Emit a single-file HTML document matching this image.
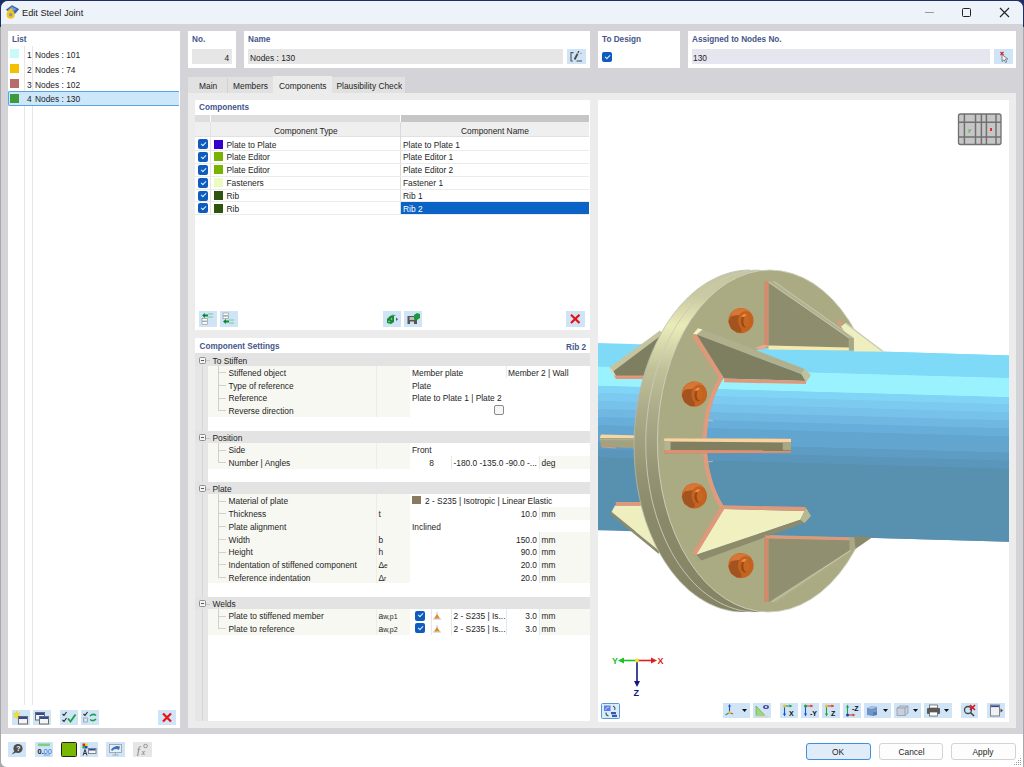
<!DOCTYPE html>
<html><head><meta charset="utf-8">
<style>
*{box-sizing:border-box;margin:0;padding:0}
html,body{width:1024px;height:767px;overflow:hidden}
body{background:linear-gradient(#1d2f66 0,#1d2f66 27px,#a9a9ac 27px);font-family:"Liberation Sans",sans-serif;font-size:8.4px;color:#1e1e1e;position:relative}
.a{position:absolute}
.t{position:absolute;white-space:nowrap;line-height:13.4px}
.h{position:absolute;white-space:nowrap;font-weight:bold;font-size:8.2px;color:#45568a;line-height:12px}
.btn{position:absolute;background:#cfe4f6;width:18px;height:15px}
.cb{position:absolute;width:10px;height:10px;background:#0f5cbf;border-radius:2px}
.cb:after{content:"";position:absolute;left:3.7px;top:1.9px;width:2.2px;height:4.2px;border:solid #e8f0ff;border-width:0 1px 1px 0;transform:rotate(45deg)}
.sw{position:absolute;width:9px;height:9px}
svg{position:absolute;overflow:visible}
</style></head>
<body>
<!-- window background -->
<div class="a" style="left:1px;top:1px;width:1022px;height:766px;background:#d3d3d8;border-radius:7px 7px 0 6px"></div>
<div class="a" style="left:1px;top:1px;width:1022px;height:23px;background:#eef2f9;border-radius:7px 7px 0 0"></div>
<div class="a" style="left:1px;top:734px;width:1022px;height:33px;background:#ffffff;border-radius:0 0 0 6px"></div>
<svg style="left:1014px;top:758px" width="9" height="9"><g fill="#9a9a9a"><rect x="6" y="0" width="1" height="1"/><rect x="4" y="2" width="1" height="1"/><rect x="6" y="2" width="1" height="1"/><rect x="2" y="4" width="1" height="1"/><rect x="4" y="4" width="1" height="1"/><rect x="6" y="4" width="1" height="1"/><rect x="0" y="6" width="1" height="1"/><rect x="2" y="6" width="1" height="1"/><rect x="4" y="6" width="1" height="1"/><rect x="6" y="6" width="1" height="1"/></g></svg>

<!-- title -->
<svg style="left:0;top:0" width="24" height="24" viewBox="0 0 24 24">
  <polygon points="6.3,9.8 12,5.6 18.7,9.2 14.8,13.8 9.5,11.5" fill="#3563b0" stroke="#24407a" stroke-width="0.5"/>
  <polygon points="8,9.6 12,6.6 16.5,9 13.5,11.8" fill="#6a9ae0"/>
  <circle cx="10.7" cy="14.7" r="2.9" fill="#8a8fa8" stroke="#f2c61c" stroke-width="2.3"/>
  <path d="M12.6 9.4 Q8.2 10 7.8 14.5" fill="none" stroke="#f2c61c" stroke-width="2.3"/>
</svg>
<div class="t" style="left:22px;top:7px;font-size:9.2px;color:#1b1b1b">Edit Steel Joint</div>
<div class="a" style="left:925px;top:12px;width:9px;height:1px;background:#9a9a9a"></div>
<div class="a" style="left:962px;top:8px;width:9px;height:9px;border:1.2px solid #222;border-radius:1.5px"></div>
<svg style="left:999px;top:7px" width="11" height="11"><path d="M1 1 L10 10 M10 1 L1 10" stroke="#222" stroke-width="1.1"/></svg>

<!-- LEFT LIST PANEL -->
<div class="a" style="left:8px;top:31px;width:172px;height:697px;background:#fff"></div>
<div class="h" style="left:12px;top:34px">List</div>
<div class="a" style="left:24px;top:46px;width:1px;height:659px;background:#e6e6e6"></div>
<div class="a" style="left:32px;top:46px;width:1px;height:659px;background:#e6e6e6"></div>
<div class="a" style="left:8px;top:91px;width:170.6px;height:15px;background:#cce6fa;border:1px solid #5aa4e6;border-right:none;border-radius:2px 0 0 2px"></div>
<div class="sw" style="left:10px;top:49px;background:#c8fafa"></div>
<div class="sw" style="left:10px;top:64px;background:#f5c000"></div>
<div class="sw" style="left:10px;top:79px;background:#b86c6c"></div>
<div class="sw" style="left:10px;top:93.5px;background:#3e9a3a"></div>
<div class="t" style="left:27px;top:48.5px">1</div><div class="t" style="left:35px;top:48.5px">Nodes : 101</div>
<div class="t" style="left:27px;top:63.5px">2</div><div class="t" style="left:35px;top:63.5px">Nodes : 74</div>
<div class="t" style="left:27px;top:78.5px">3</div><div class="t" style="left:35px;top:78.5px">Nodes : 102</div>
<div class="t" style="left:27px;top:93px">4</div><div class="t" style="left:35px;top:93px">Nodes : 130</div>

<!-- HEADER FIELDS -->
<div class="a" style="left:188px;top:31px;width:48px;height:37px;background:#fff"></div>
<div class="h" style="left:192px;top:34px">No.</div>
<div class="a" style="left:192px;top:49px;width:40px;height:15px;background:#e6e6e6"></div>
<div class="t" style="left:224.5px;top:51.5px">4</div>

<div class="a" style="left:244px;top:31px;width:345.5px;height:37px;background:#fff"></div>
<div class="h" style="left:248px;top:34px">Name</div>
<div class="a" style="left:248px;top:49px;width:315px;height:15px;background:#e6e6e6"></div>
<div class="t" style="left:250px;top:52px">Nodes : 130</div>


<div class="a" style="left:598px;top:31px;width:82px;height:37px;background:#fff"></div>
<div class="h" style="left:602px;top:34px">To Design</div>
<div class="cb" style="left:602px;top:52px"></div>

<div class="a" style="left:688px;top:31px;width:328px;height:37px;background:#fff"></div>
<div class="h" style="left:692px;top:34px">Assigned to Nodes No.</div>
<div class="a" style="left:692px;top:49px;width:298px;height:15px;background:#e6e6f0"></div>
<div class="t" style="left:693px;top:52px">130</div>


<!-- TABS -->
<div class="a" style="left:188px;top:77px;width:217px;height:16px;background:#e1e1e1"></div>
<div class="a" style="left:227px;top:78px;width:1px;height:15px;background:#d0d0d0"></div>
<div class="a" style="left:273px;top:76px;width:59px;height:17px;background:#ececec"></div>
<div class="t" style="left:199px;top:80px">Main</div>
<div class="t" style="left:233px;top:80px">Members</div>
<div class="t" style="left:279px;top:80px">Components</div>
<div class="t" style="left:336.5px;top:80px">Plausibility Check</div>

<!-- CONTENT AREA -->
<div class="a" style="left:188px;top:93px;width:828px;height:635px;background:#ececec"></div>

<!-- COMPONENTS PANEL -->
<div class="a" style="left:195px;top:100px;width:395px;height:230px;background:#fff"></div>
<div class="h" style="left:199px;top:102px">Components</div>


<!-- components table -->
<div class="a" style="left:195px;top:114.5px;width:15px;height:7.5px;background:#dedede"></div>
<div class="a" style="left:211px;top:114.5px;width:189px;height:7.5px;background:#dedede"></div>
<div class="a" style="left:401px;top:114.5px;width:188px;height:7.5px;background:#c6c6c6"></div>
<div class="a" style="left:195px;top:122px;width:394px;height:15px;background:#efefef;border-bottom:1px solid #e2e2e2"></div>
<div class="a" style="left:210px;top:122px;width:1px;height:92px;background:#e4e4e4"></div>
<div class="a" style="left:400px;top:122px;width:1px;height:92px;background:#dadada"></div>
<div class="t" style="left:274px;top:125px">Component Type</div>
<div class="t" style="left:461px;top:125px">Component Name</div>
<div class="a" style="left:195px;top:150.00px;width:394px;height:1px;background:#ebebeb"></div>
<div class="cb" style="left:198px;top:139.20px"></div><div class="sw" style="left:214px;top:139.60px;background:#3300cc"></div>
<div class="t" style="left:226.5px;top:138.50px">Plate to Plate</div>
<div class="t" style="left:403px;top:138.50px">Plate to Plate 1</div>
<div class="a" style="left:195px;top:162.84px;width:394px;height:1px;background:#ebebeb"></div>
<div class="cb" style="left:198px;top:152.04px"></div><div class="sw" style="left:214px;top:152.44px;background:#77b300"></div>
<div class="t" style="left:226.5px;top:151.34px">Plate Editor</div>
<div class="t" style="left:403px;top:151.34px">Plate Editor 1</div>
<div class="a" style="left:195px;top:175.68px;width:394px;height:1px;background:#ebebeb"></div>
<div class="cb" style="left:198px;top:164.88px"></div><div class="sw" style="left:214px;top:165.28px;background:#77b300"></div>
<div class="t" style="left:226.5px;top:164.18px">Plate Editor</div>
<div class="t" style="left:403px;top:164.18px">Plate Editor 2</div>
<div class="a" style="left:195px;top:188.52px;width:394px;height:1px;background:#ebebeb"></div>
<div class="cb" style="left:198px;top:177.72px"></div><div class="sw" style="left:214px;top:178.12px;background:#eafcc0"></div>
<div class="t" style="left:226.5px;top:177.02px">Fasteners</div>
<div class="t" style="left:403px;top:177.02px">Fastener 1</div>
<div class="a" style="left:195px;top:201.36px;width:394px;height:1px;background:#ebebeb"></div>
<div class="cb" style="left:198px;top:190.56px"></div><div class="sw" style="left:214px;top:190.96px;background:#2e5410"></div>
<div class="t" style="left:226.5px;top:189.86px">Rib</div>
<div class="t" style="left:403px;top:189.86px">Rib 1</div>
<div class="a" style="left:195px;top:214.20px;width:394px;height:1px;background:#ebebeb"></div>
<div class="cb" style="left:198px;top:203.40px"></div><div class="sw" style="left:214px;top:203.80px;background:#2e5410"></div>
<div class="t" style="left:226.5px;top:202.70px">Rib</div>
<div class="a" style="left:401px;top:202.40px;width:188px;height:11.8px;background:#0b63c6"></div>
<div class="t" style="left:403px;top:202.70px;color:#fff">Rib 2</div>

<!-- SETTINGS PANEL -->
<div class="a" style="left:195px;top:338px;width:395px;height:383px;background:#fff"></div>
<div class="h" style="left:199.5px;top:340.8px">Component Settings</div>

<!-- settings content -->
<div class="a" style="left:195px;top:353px;width:13px;height:368px;background:#e6e6e6"></div>
<div class="a" style="left:201.5px;top:365px;width:1.5px;height:356px;background:#d6d6d6"></div>
<div class="h" style="left:566px;top:341.5px">Rib 2</div>
<div class="a" style="left:195px;top:353px;width:395px;height:12.5px;background:#e3e3e3"></div>
<div class="a" style="left:198.5px;top:356.5px;width:7px;height:7px;border:1px solid #8c8c8c;border-radius:1.5px;background:#f4f4f4"></div>
<div class="a" style="left:200.5px;top:359.5px;width:3px;height:1px;background:#555"></div>
<div class="a" style="left:206px;top:360px;width:4px;height:1px;background:#c8c8c8"></div>
<div class="t" style="left:212.5px;top:354.50px;">To Stiffen</div>
<div class="a" style="left:208px;top:365.5px;width:202px;height:51.00px;background:#f8f8f3"></div>
<div class="a" style="left:376px;top:365.5px;width:1px;height:51.00px;background:#ececec"></div>
<div class="a" style="left:217.5px;top:365.5px;width:1px;height:44.75px;background:#d0d0d0"></div>
<div class="a" style="left:218px;top:372.00px;width:8px;height:1px;background:#d0d0d0"></div>
<div class="t" style="left:228.5px;top:366.80px;">Stiffened object</div>
<div class="t" style="left:412px;top:366.80px;">Member plate</div>
<div class="a" style="left:506px;top:365.5px;width:1px;height:12.75px;background:#e8e8e8"></div>
<div class="t" style="left:508px;top:366.80px;">Member 2 | Wall</div>
<div class="a" style="left:218px;top:384.75px;width:8px;height:1px;background:#d0d0d0"></div>
<div class="t" style="left:228.5px;top:379.55px;">Type of reference</div>
<div class="t" style="left:412px;top:379.55px;">Plate</div>
<div class="a" style="left:218px;top:397.50px;width:8px;height:1px;background:#d0d0d0"></div>
<div class="t" style="left:228.5px;top:392.30px;">Reference</div>
<div class="t" style="left:412px;top:392.30px;">Plate to Plate 1 | Plate 2</div>
<div class="a" style="left:218px;top:410.25px;width:8px;height:1px;background:#d0d0d0"></div>
<div class="t" style="left:228.5px;top:405.05px;">Reverse direction</div>
<div class="a" style="left:494px;top:405.25px;width:10px;height:10px;border:1px solid #8a8a8a;border-radius:2px;background:#f6f6f6"></div>
<div class="a" style="left:195px;top:430.5px;width:395px;height:12.5px;background:#e3e3e3"></div>
<div class="a" style="left:198.5px;top:434.0px;width:7px;height:7px;border:1px solid #8c8c8c;border-radius:1.5px;background:#f4f4f4"></div>
<div class="a" style="left:200.5px;top:437.0px;width:3px;height:1px;background:#555"></div>
<div class="a" style="left:206px;top:437.5px;width:4px;height:1px;background:#c8c8c8"></div>
<div class="t" style="left:212.5px;top:432.00px;">Position</div>
<div class="a" style="left:208px;top:443.0px;width:202px;height:25.50px;background:#f8f8f3"></div>
<div class="a" style="left:376px;top:443.0px;width:1px;height:25.50px;background:#ececec"></div>
<div class="a" style="left:217.5px;top:443.0px;width:1px;height:19.25px;background:#d0d0d0"></div>
<div class="a" style="left:218px;top:449.50px;width:8px;height:1px;background:#d0d0d0"></div>
<div class="t" style="left:228.5px;top:444.30px;">Side</div>
<div class="t" style="left:412px;top:444.30px;">Front</div>
<div class="a" style="left:218px;top:462.25px;width:8px;height:1px;background:#d0d0d0"></div>
<div class="t" style="left:228.5px;top:457.05px;">Number | Angles</div>
<div class="t" style="left:374px;width:60px;text-align:right;top:457.05px">8</div>
<div class="a" style="left:451px;top:455.75px;width:1px;height:12.75px;background:#e8e8e8"></div>
<div class="t" style="left:453.5px;top:457.05px;">-180.0 -135.0 -90.0 -...</div>
<div class="a" style="left:538.5px;top:455.75px;width:51.5px;height:12.75px;background:#f8f8f3"></div>
<div class="a" style="left:538.5px;top:455.75px;width:1px;height:12.75px;background:#e8e8e8"></div>
<div class="t" style="left:541.5px;top:457.05px;">deg</div>
<div class="a" style="left:195px;top:481.5px;width:395px;height:12.5px;background:#e3e3e3"></div>
<div class="a" style="left:198.5px;top:485.0px;width:7px;height:7px;border:1px solid #8c8c8c;border-radius:1.5px;background:#f4f4f4"></div>
<div class="a" style="left:200.5px;top:488.0px;width:3px;height:1px;background:#555"></div>
<div class="a" style="left:206px;top:488.5px;width:4px;height:1px;background:#c8c8c8"></div>
<div class="t" style="left:212.5px;top:483.00px;">Plate</div>
<div class="a" style="left:208px;top:494.0px;width:202px;height:89.25px;background:#f8f8f3"></div>
<div class="a" style="left:376px;top:494.0px;width:1px;height:89.25px;background:#ececec"></div>
<div class="a" style="left:217.5px;top:494.0px;width:1px;height:83.00px;background:#d0d0d0"></div>
<div class="a" style="left:218px;top:500.50px;width:8px;height:1px;background:#d0d0d0"></div>
<div class="t" style="left:228.5px;top:495.30px;">Material of plate</div>
<div class="a" style="left:412px;top:496.00px;width:9px;height:8px;background:#8a7a60"></div>
<div class="t" style="left:425px;top:495.30px;">2 - S235 | Isotropic | Linear Elastic</div>
<div class="a" style="left:218px;top:513.25px;width:8px;height:1px;background:#d0d0d0"></div>
<div class="t" style="left:228.5px;top:508.05px;">Thickness</div>
<div class="t" style="left:378.5px;top:508.05px;">t</div>
<div class="t" style="left:477px;width:60px;text-align:right;top:508.05px">10.0</div>
<div class="a" style="left:538.5px;top:506.75px;width:51.5px;height:12.75px;background:#f8f8f3"></div>
<div class="a" style="left:538.5px;top:506.75px;width:1px;height:12.75px;background:#e8e8e8"></div>
<div class="t" style="left:541.5px;top:508.05px;">mm</div>
<div class="a" style="left:218px;top:526.00px;width:8px;height:1px;background:#d0d0d0"></div>
<div class="t" style="left:228.5px;top:520.80px;">Plate alignment</div>
<div class="t" style="left:412px;top:520.80px;">Inclined</div>
<div class="a" style="left:218px;top:538.75px;width:8px;height:1px;background:#d0d0d0"></div>
<div class="t" style="left:228.5px;top:533.55px;">Width</div>
<div class="t" style="left:378.5px;top:533.55px;">b</div>
<div class="t" style="left:477px;width:60px;text-align:right;top:533.55px">150.0</div>
<div class="a" style="left:538.5px;top:532.25px;width:51.5px;height:12.75px;background:#f8f8f3"></div>
<div class="a" style="left:538.5px;top:532.25px;width:1px;height:12.75px;background:#e8e8e8"></div>
<div class="t" style="left:541.5px;top:533.55px;">mm</div>
<div class="a" style="left:218px;top:551.50px;width:8px;height:1px;background:#d0d0d0"></div>
<div class="t" style="left:228.5px;top:546.30px;">Height</div>
<div class="t" style="left:378.5px;top:546.30px;">h</div>
<div class="t" style="left:477px;width:60px;text-align:right;top:546.30px">90.0</div>
<div class="a" style="left:538.5px;top:545.0px;width:51.5px;height:12.75px;background:#f8f8f3"></div>
<div class="a" style="left:538.5px;top:545.0px;width:1px;height:12.75px;background:#e8e8e8"></div>
<div class="t" style="left:541.5px;top:546.30px;">mm</div>
<div class="a" style="left:218px;top:564.25px;width:8px;height:1px;background:#d0d0d0"></div>
<div class="t" style="left:228.5px;top:559.05px;">Indentation of stiffened component</div>
<div class="t" style="left:378.5px;top:559.05px;">&Delta;<span style='font-size:6.5px'>e</span></div>
<div class="t" style="left:477px;width:60px;text-align:right;top:559.05px">20.0</div>
<div class="a" style="left:538.5px;top:557.75px;width:51.5px;height:12.75px;background:#f8f8f3"></div>
<div class="a" style="left:538.5px;top:557.75px;width:1px;height:12.75px;background:#e8e8e8"></div>
<div class="t" style="left:541.5px;top:559.05px;">mm</div>
<div class="a" style="left:218px;top:577.00px;width:8px;height:1px;background:#d0d0d0"></div>
<div class="t" style="left:228.5px;top:571.80px;">Reference indentation</div>
<div class="t" style="left:378.5px;top:571.80px;">&Delta;<span style='font-size:6.5px'>r</span></div>
<div class="t" style="left:477px;width:60px;text-align:right;top:571.80px">20.0</div>
<div class="a" style="left:538.5px;top:570.5px;width:51.5px;height:12.75px;background:#f8f8f3"></div>
<div class="a" style="left:538.5px;top:570.5px;width:1px;height:12.75px;background:#e8e8e8"></div>
<div class="t" style="left:541.5px;top:571.80px;">mm</div>
<div class="a" style="left:195px;top:596.5px;width:395px;height:12.5px;background:#e3e3e3"></div>
<div class="a" style="left:198.5px;top:600.0px;width:7px;height:7px;border:1px solid #8c8c8c;border-radius:1.5px;background:#f4f4f4"></div>
<div class="a" style="left:200.5px;top:603.0px;width:3px;height:1px;background:#555"></div>
<div class="a" style="left:206px;top:603.5px;width:4px;height:1px;background:#c8c8c8"></div>
<div class="t" style="left:212.5px;top:598.00px;">Welds</div>
<div class="a" style="left:208px;top:609.0px;width:202px;height:25.50px;background:#f8f8f3"></div>
<div class="a" style="left:376px;top:609.0px;width:1px;height:25.50px;background:#ececec"></div>
<div class="a" style="left:217.5px;top:609.0px;width:1px;height:19.25px;background:#d0d0d0"></div>
<div class="a" style="left:218px;top:615.50px;width:8px;height:1px;background:#d0d0d0"></div>
<div class="t" style="left:228.5px;top:610.30px;">Plate to stiffened member</div>
<div class="t" style="left:378.5px;top:610.30px;">a<span style='font-size:7px'>w,p1</span></div>
<div class="cb" style="left:415px;top:610.50px"></div>
<div class="a" style="left:430.5px;top:609.0px;width:1px;height:12.75px;background:#e8e8e8"></div>
<svg style="left:432px;top:611.00px" width="10" height="9"><path d="M5 1 L5 7 M1 8 L9 8" stroke="#b8c4d8" stroke-width="1"/><path d="M5 3 L2 7.5 L8 7.5 Z" fill="#e08a20"/></svg>
<div class="a" style="left:450.5px;top:609.0px;width:1px;height:12.75px;background:#e8e8e8"></div>
<div class="t" style="left:453.5px;top:610.30px;">2 - S235 | Is...</div>
<div class="a" style="left:505.5px;top:609.0px;width:1px;height:12.75px;background:#e8e8e8"></div>
<div class="t" style="left:477px;width:60px;text-align:right;top:610.30px">3.0</div>
<div class="a" style="left:538.5px;top:609.0px;width:51.5px;height:12.75px;background:#f8f8f3"></div>
<div class="a" style="left:538.5px;top:609.0px;width:1px;height:12.75px;background:#e8e8e8"></div>
<div class="t" style="left:541.5px;top:610.30px;">mm</div>
<div class="a" style="left:218px;top:628.25px;width:8px;height:1px;background:#d0d0d0"></div>
<div class="t" style="left:228.5px;top:623.05px;">Plate to reference</div>
<div class="t" style="left:378.5px;top:623.05px;">a<span style='font-size:7px'>w,p2</span></div>
<div class="cb" style="left:415px;top:623.25px"></div>
<div class="a" style="left:430.5px;top:621.75px;width:1px;height:12.75px;background:#e8e8e8"></div>
<svg style="left:432px;top:623.75px" width="10" height="9"><path d="M5 1 L5 7 M1 8 L9 8" stroke="#b8c4d8" stroke-width="1"/><path d="M5 3 L2 7.5 L8 7.5 Z" fill="#e08a20"/></svg>
<div class="a" style="left:450.5px;top:621.75px;width:1px;height:12.75px;background:#e8e8e8"></div>
<div class="t" style="left:453.5px;top:623.05px;">2 - S235 | Is...</div>
<div class="a" style="left:505.5px;top:621.75px;width:1px;height:12.75px;background:#e8e8e8"></div>
<div class="t" style="left:477px;width:60px;text-align:right;top:623.05px">3.0</div>
<div class="a" style="left:538.5px;top:621.75px;width:51.5px;height:12.75px;background:#f8f8f3"></div>
<div class="a" style="left:538.5px;top:621.75px;width:1px;height:12.75px;background:#e8e8e8"></div>
<div class="t" style="left:541.5px;top:623.05px;">mm</div>
<!-- 3D VIEW -->
<div class="a" style="left:598px;top:100px;width:411px;height:622px;background:#fff"></div>
<!--3DSVG--><svg style="left:598px;top:100px" width="411" height="622" viewBox="598 100 411 622">
<defs>
<linearGradient id="pipeg" gradientUnits="userSpaceOnUse" x1="800" y1="349" x2="794.8" y2="536">
 <stop offset="0.000" stop-color="#7fdaf8"/>
 <stop offset="0.122" stop-color="#7fdaf8"/>
 <stop offset="0.126" stop-color="#9af2ff"/>
 <stop offset="0.224" stop-color="#9af2ff"/>
 <stop offset="0.228" stop-color="#80d4f6"/>
 <stop offset="0.262" stop-color="#80d4f6"/>
 <stop offset="0.266" stop-color="#7ccaf0"/>
 <stop offset="0.305" stop-color="#7ccaf0"/>
 <stop offset="0.309" stop-color="#76c2ea"/>
 <stop offset="0.348" stop-color="#76c2ea"/>
 <stop offset="0.352" stop-color="#70b8e2"/>
 <stop offset="0.391" stop-color="#70b8e2"/>
 <stop offset="0.395" stop-color="#68aeda"/>
 <stop offset="0.434" stop-color="#68aeda"/>
 <stop offset="0.438" stop-color="#62a6d0"/>
 <stop offset="0.520" stop-color="#62a6d0"/>
 <stop offset="0.524" stop-color="#5e9cc4"/>
 <stop offset="0.563" stop-color="#5e9cc4"/>
 <stop offset="0.567" stop-color="#5a96bc"/>
 <stop offset="0.606" stop-color="#5a96bc"/>
 <stop offset="0.610" stop-color="#5890b0"/>
 <stop offset="1.000" stop-color="#5890b0"/>
</linearGradient>
<linearGradient id="rimg" gradientUnits="userSpaceOnUse" x1="0" y1="270" x2="0" y2="612">
 <stop offset="0" stop-color="#c4c49e"/>
 <stop offset="0.08" stop-color="#cacaa2"/>
 <stop offset="0.13" stop-color="#dcdcae"/>
 <stop offset="0.17" stop-color="#eaecb8"/>
 <stop offset="0.23" stop-color="#d6d8aa"/>
 <stop offset="0.30" stop-color="#c0c098"/>
 <stop offset="0.415" stop-color="#acac8a"/>
 <stop offset="0.526" stop-color="#9e9e7c"/>
 <stop offset="0.614" stop-color="#939373"/>
 <stop offset="0.73" stop-color="#8a8a6a"/>
 <stop offset="1" stop-color="#848464"/>
</linearGradient>
</defs>
<polygon points="598,343 1009,355.5 1009,541.8 598,530.2" fill="url(#pipeg)"/>
<polygon points="612,369 662,333 660,376 616,376" fill="#7e7e60"/>
<polygon points="609.5,367.5 660,330.5 663,334 613,371.5" fill="#c4c4a0"/>
<polygon points="612,369 616,376 614,376.5 609.5,368" fill="#d8d8b0"/>
<polygon points="614,375.6 660,375.6 660,379 616,379" fill="#e0987a"/>
<polygon points="599.7,438 640,438.2 640,448.8 601,446.2" fill="#a2a280"/>
<polygon points="601,434.5 640,435.6 640,438.2 599.7,438" fill="#fcd6a2"/>
<polyline points="600,439.6 640,439.8" fill="none" stroke="#c0c0a0" stroke-width="0.6"/>
<polygon points="601,446.2 616,447.6 616,448.6 602.5,447.4" fill="#e0987a"/>
<polygon points="615,505.5 652,505.5 662,553 611.5,512" fill="#eeeebe"/>
<polygon points="615.8,502 652,502 652,505.8 615.8,505.8" fill="#e0987a"/>
<polygon points="611.5,512 660,551.5 658.5,553.8 610,514" fill="#8c8c6c"/>
<ellipse cx="746.7" cy="441.0" rx="112.6" ry="171.0" transform="rotate(1.8 746.7 441.0)" fill="url(#rimg)"/>
<polygon points="752.1,270.1 770.4,270.0 768.0,612.0 741.3,611.9" fill="url(#rimg)"/>
<polyline points="739.4,611.8 733.6,611.3 727.8,610.2 722.1,608.8 716.4,606.8 710.8,604.5 705.3,601.7 700.0,598.4 694.7,594.8 689.6,590.7 684.7,586.2 679.9,581.3 675.3,576.1 670.9,570.5 666.7,564.6 662.7,558.3 658.9,551.7 655.4,544.8 652.1,537.6 649.0,530.2 646.2,522.5 643.7,514.6 641.5,506.6 639.6,498.3 637.9,489.9 636.5,481.3 635.5,472.7 634.7,463.9 634.2,455.1 634.0,446.3 634.2,437.5 634.6,428.6 635.3,419.8 636.3,411.1 637.7,402.4 639.3,393.8 641.2,385.4 643.4,377.1 645.8,369.0 648.6,361.0 651.6,353.3 654.8,345.9 658.3,338.6 662.1,331.7 666.0,325.0 670.2,318.7 674.6,312.7 679.2,307.0 683.9,301.7 688.8,296.7 693.9,292.2 699.1,288.0 704.5,284.3 710.0,281.0 715.5,278.1 721.2,275.6 726.9,273.6 732.6,272.0 738.4,270.9 744.3,270.2 750.1,270.0" fill="none" stroke="#b8b8ac" stroke-width="0.8"/>
<polyline points="752.8,611.9 747.0,611.4 741.2,610.5 735.5,609.1 729.8,607.2 724.2,604.9 718.7,602.2 713.4,599.0 708.1,595.4 702.9,591.4 698.0,587.0 693.1,582.2 688.5,577.0 684.0,571.4 679.7,565.5 675.7,559.3 671.8,552.7 668.2,545.9 664.9,538.8 661.8,531.4 658.9,523.7 656.3,515.9 654.0,507.8 651.9,499.6 650.2,491.2 648.7,482.7 647.5,474.0 646.7,465.3 646.1,456.5 645.8,447.7 645.8,438.8 646.1,430.0 646.8,421.2 647.7,412.4 648.9,403.7 650.4,395.1 652.2,386.7 654.3,378.4 656.6,370.2 659.3,362.3 662.2,354.5 665.3,347.0 668.7,339.7 672.3,332.7 676.2,326.0 680.3,319.6 684.6,313.6 689.1,307.8 693.8,302.5 698.6,297.5 703.6,292.8 708.8,288.6 714.0,284.8 719.4,281.4 725.0,278.5 730.6,275.9 736.2,273.8 741.9,272.2 747.7,271.0 753.5,270.3 759.3,270.0" fill="none" stroke="#cacabe" stroke-width="0.9"/>
<ellipse cx="769.2" cy="441.0" rx="111.8" ry="171.0" transform="rotate(0.4 769.2 441.0)" fill="#abab83" stroke="#cfcfc0" stroke-width="0.9"/>
<polygon points="769.9,347.9 1009.0,355.5 1009.0,541.8 768.5,535.1 768.5,535.1 765.3,534.9 762.0,534.5 758.8,533.9 755.6,533.0 752.4,531.8 749.3,530.4 746.2,528.7 743.2,526.8 740.2,524.7 737.4,522.3 734.6,519.8 731.9,517.0 729.4,514.0 726.9,510.8 724.5,507.4 722.3,503.8 720.2,500.1 718.3,496.2 716.4,492.1 714.7,487.9 713.2,483.6 711.8,479.2 710.6,474.6 709.6,470.0 708.7,465.3 707.9,460.5 707.4,455.7 707.0,450.8 706.8,446.0 706.7,441.1 706.8,436.2 707.1,431.3 707.6,426.4 708.2,421.6 709.0,416.9 710.0,412.2 711.1,407.6 712.4,403.0 713.8,398.6 715.4,394.3 717.1,390.2 719.0,386.1 721.0,382.3 723.2,378.5 725.5,375.0 727.9,371.7 730.4,368.5 733.0,365.5 735.7,362.8 738.5,360.2 741.4,357.9 744.4,355.8 747.4,354.0 750.5,352.3 753.7,351.0 756.8,349.9 760.1,349.0 763.3,348.4 766.6,348.0 769.9,347.9" fill="url(#pipeg)"/>
<polyline points="724.5,510.8 722.6,508.1 720.8,505.2 719.1,502.3 717.5,499.2 716.0,496.1 714.5,492.8 713.2,489.5 711.9,486.1 710.7,482.6 709.7,479.0 708.7,475.4 707.8,471.8 707.0,468.0 706.4,464.3 705.8,460.4 705.4,456.6 705.0,452.7 704.8,448.9 704.6,445.0 704.6,441.1 704.7,437.1 704.9,433.3 705.2,429.4 705.6,425.5 706.1,421.7 706.7,417.9 707.4,414.1 708.2,410.4 709.2,406.7 710.2,403.1 711.3,399.6 712.5,396.1 713.8,392.7 715.2,389.4 716.7,386.2 718.3,383.1 720.0,380.0 721.7,377.1 723.6,374.3 725.5,371.6" fill="none" stroke="#e29a7c" stroke-width="4"/>
<path d="M707.6,420 L713,421 M707.6,462 L713,461" stroke="#f4c4a8" stroke-width="0.7"/>
<polygon points="841,326.6 845.9,322.7 884,351.5 854,351.5 853.7,337.9 848.8,337.9" fill="#eeeebe"/>
<polygon points="837.1,323.2 840,320.3 842.5,323.2 839.6,326.6" fill="#e0987a"/>
<polygon points="845.9,322.7 884,351.5 882,351.5 845,323.5" fill="#c8c8b8"/>
<polygon points="854.1,536 872,537.5 855.4,549" fill="#8a8a6a"/>
<polygon points="768.5,283 768.5,346 848.8,348.5 848.8,337.9" fill="#8e8e6e"/>
<polygon points="768.5,281.3 774,281.3 853.7,337.9 848.8,337.9" fill="#b2b290"/>
<polyline points="768.5,282 848.8,337.9" fill="none" stroke="#d0d0c0" stroke-width="0.7"/>
<polyline points="774,281.3 853.7,337.9" fill="none" stroke="#d0d0c0" stroke-width="0.7"/>
<polygon points="848.8,337.9 853.7,337.9 853.7,349.6 848.8,349" fill="#a8a886"/>
<polygon points="764.1,281.3 768.5,281.3 768.5,345 764.1,345" fill="#d28c6e"/>
<polygon points="754.6,347.9 764.1,344.8 768.5,345.4 762.2,349.8" fill="#f0a888"/>
<polygon points="768.5,345.4 848.8,347.5 848.8,350.5 768.5,349.6" fill="#f6eab0"/>
<polygon points="696.8,334.6 801.5,374 806,381 724.1,378.4" fill="#7e7e60"/>
<polygon points="702.5,329.5 804.7,368.9 801.5,374 696.8,334.6" fill="#b0b08e"/>
<polygon points="801.5,374 804.7,368.9 811,375.2 806,382.2" fill="#c0c09c"/>
<polygon points="693,334 698,328.3 702.5,329.5 696.8,334.6" fill="#f2f2c4"/>
<polygon points="691.7,335.9 696.2,334.6 724.1,378.4 720.3,379.7" fill="#e0987a"/>
<polygon points="724.1,378.4 806,381 806,384.1 724.1,382.2" fill="#e0987a"/>
<polygon points="664.1,438.3 791,438.7 791,452.8 664.1,453.2" fill="#808060"/>
<polygon points="664.1,438.2 791,438.7 791,442.6 664.1,441.5" fill="#f8d4a4"/>
<polygon points="664.1,450 791,450.2 791,452.8 664.1,453.2" fill="#e09070"/>
<polygon points="664.1,441.5 670.6,441.6 670.6,450 664.1,450" fill="#b4b490"/>
<polygon points="782.8,442.6 791,442.6 791,450.2 782.8,450.2" fill="#a8a882"/>
<polygon points="724.1,509 804.7,510.9 800.3,519.8 696.2,554.7" fill="#f0f0c0"/>
<polygon points="696.2,554.7 800.3,519.8 804.7,522.9 701.2,560.4" fill="#8c8c6c"/>
<polygon points="800.3,519.8 806,507.7 811,516 804.7,522.9" fill="#b8b890"/>
<polygon points="693,554.7 696.2,554.7 701.2,560.4 697.4,561" fill="#a8a888"/>
<polygon points="720.3,507.1 724.1,509 696.2,554.7 692.3,553.4" fill="#e0987a"/>
<polygon points="722.8,505.2 806,507.1 804.7,510.9 724.1,509" fill="#e0987a"/>
<polygon points="768.4,538 849.7,540 849.7,550.5 772,602 768.4,602" fill="#909070"/>
<polygon points="769,602 850.3,550 852.8,550 776.7,602" fill="#b0b08e"/>
<polyline points="772,602 850.3,550.5" fill="none" stroke="#d0d0c0" stroke-width="0.7"/>
<polygon points="849.7,537.3 854.1,537.3 854.1,550 849.7,550" fill="#a8a886"/>
<polygon points="764,537.9 768.4,537.9 768.4,602 764,602" fill="#d08a6c"/>
<polygon points="764,535.6 849.7,537.5 849.7,540.2 768.4,538.5" fill="#e0987a"/>
<g transform="translate(741,320.6)"><circle cx="0" cy="0" r="12.6" fill="#c6651f"/><polygon points="-12,-3.5 -7,-10.5 2,-12.6 9,-9 1,-6 -8,-4.5" fill="#d87636"/><polygon points="-9.5,-4.5 -1,-5.5 0.5,11.8 -4,12 -10,8 -12.5,1" fill="#a25320"/><ellipse cx="4.5" cy="0" rx="7.6" ry="9.6" fill="#c4621f"/><ellipse cx="3.8" cy="1" rx="3.6" ry="6" fill="#98481a"/><ellipse cx="5.3" cy="0.5" rx="3" ry="5.8" fill="#c86820"/><polygon points="0,-4 3,-6.5 6,-6 3,-3.5" fill="#ee9050"/></g>
<g transform="translate(694.4,394.2)"><circle cx="0" cy="0" r="12.6" fill="#c6651f"/><polygon points="-12,-3.5 -7,-10.5 2,-12.6 9,-9 1,-6 -8,-4.5" fill="#d87636"/><polygon points="-9.5,-4.5 -1,-5.5 0.5,11.8 -4,12 -10,8 -12.5,1" fill="#a25320"/><ellipse cx="4.5" cy="0" rx="7.6" ry="9.6" fill="#c4621f"/><ellipse cx="3.8" cy="1" rx="3.6" ry="6" fill="#98481a"/><ellipse cx="5.3" cy="0.5" rx="3" ry="5.8" fill="#c86820"/><polygon points="0,-4 3,-6.5 6,-6 3,-3.5" fill="#ee9050"/></g>
<g transform="translate(694.4,495.8)"><circle cx="0" cy="0" r="12.6" fill="#c6651f"/><polygon points="-12,-3.5 -7,-10.5 2,-12.6 9,-9 1,-6 -8,-4.5" fill="#d87636"/><polygon points="-9.5,-4.5 -1,-5.5 0.5,11.8 -4,12 -10,8 -12.5,1" fill="#a25320"/><ellipse cx="4.5" cy="0" rx="7.6" ry="9.6" fill="#c4621f"/><ellipse cx="3.8" cy="1" rx="3.6" ry="6" fill="#98481a"/><ellipse cx="5.3" cy="0.5" rx="3" ry="5.8" fill="#c86820"/><polygon points="0,-4 3,-6.5 6,-6 3,-3.5" fill="#ee9050"/></g>
<g transform="translate(741,565.5)"><circle cx="0" cy="0" r="12.6" fill="#c6651f"/><polygon points="-12,-3.5 -7,-10.5 2,-12.6 9,-9 1,-6 -8,-4.5" fill="#d87636"/><polygon points="-9.5,-4.5 -1,-5.5 0.5,11.8 -4,12 -10,8 -12.5,1" fill="#a25320"/><ellipse cx="4.5" cy="0" rx="7.6" ry="9.6" fill="#c4621f"/><ellipse cx="3.8" cy="1" rx="3.6" ry="6" fill="#98481a"/><ellipse cx="5.3" cy="0.5" rx="3" ry="5.8" fill="#c86820"/><polygon points="0,-4 3,-6.5 6,-6 3,-3.5" fill="#ee9050"/></g>
<line x1="637" y1="660.5" x2="652" y2="660.5" stroke="#e02020" stroke-width="1.6"/>
<polygon points="651,657.5 657,660.5 651,663.5" fill="#e02020"/>
<line x1="637" y1="660.5" x2="623" y2="660.5" stroke="#20c020" stroke-width="1.6"/>
<polygon points="624,657.5 618,660.5 624,663.5" fill="#20c020"/>
<line x1="637" y1="660.5" x2="637" y2="682" stroke="#101880" stroke-width="1.6"/>
<polygon points="634,681 637,687 640,681" fill="#101880"/>
<circle cx="637" cy="660.5" r="2" fill="#f0e020"/>
<text x="657.5" y="664" font-family="Liberation Sans" font-size="9" font-weight="bold" fill="#e02020">X</text>
<text x="612" y="664" font-family="Liberation Sans" font-size="9" font-weight="bold" fill="#20c020">Y</text>
<text x="633.5" y="696" font-family="Liberation Sans" font-size="9" font-weight="bold" fill="#101880">Z</text>
<rect x="958.5" y="114" width="42.5" height="30.5" rx="2" fill="#c6c6c6" stroke="#707070" stroke-width="1.3"/>
<line x1="964.4" y1="114" x2="964.4" y2="144.5" stroke="#707070" stroke-width="1.5"/>
<line x1="975.5" y1="114" x2="975.5" y2="144.5" stroke="#707070" stroke-width="1.5"/>
<line x1="981.4" y1="114" x2="981.4" y2="144.5" stroke="#707070" stroke-width="1.5"/>
<line x1="986.4" y1="114" x2="986.4" y2="144.5" stroke="#707070" stroke-width="1.5"/>
<line x1="996" y1="114" x2="996" y2="144.5" stroke="#707070" stroke-width="1.5"/>
<line x1="958.5" y1="122.3" x2="1001" y2="122.3" stroke="#707070" stroke-width="1.5"/>
<line x1="958.5" y1="137" x2="1001" y2="137" stroke="#707070" stroke-width="1.5"/>
<text x="968" y="132" font-family="Liberation Sans" font-size="6" fill="#30a030" font-style="italic">y</text>
<rect x="990" y="128" width="2" height="3" fill="#e03030"/>
</svg><!--/3DSVG-->

<!--ICONS--><div class="a" style="left:567px;top:49.4px;width:18.5px;height:14.7px;background:#cfe4f6;"></div>
<svg style="left:567px;top:49.4px" width="19" height="15" viewBox="0 0 19 15"><path d="M6.5 3.6 L4 3.6 L4 12 L5.8 12" fill="none" stroke="#555" stroke-width="1.1"/><path d="M9.5 12 L15 12" stroke="#555" stroke-width="1.1"/><path d="M7.6 10.5 L10.6 4.6" stroke="#4a4a4a" stroke-width="1.9"/><path d="M10.9 3.8 L11.8 2.2" stroke="#4a4a4a" stroke-width="1.4"/><circle cx="14" cy="4.3" r="0.5" fill="#4a4a4a"/></svg>
<div class="a" style="left:994px;top:49.2px;width:18.5px;height:15px;background:#cfe4f6;"></div>
<svg style="left:994px;top:49.2px" width="19" height="15" viewBox="0 0 19 15"><path d="M6.5 3 L9.5 6 M9.5 3 L6.5 6" stroke="#e02020" stroke-width="1.2"/><path d="M8 5.5 L8 12.5 L10 10.8 L11.5 13.5 L12.8 12.8 L11.3 10.2 L13.8 10 Z" fill="#f4f4f4" stroke="#6a6a6a" stroke-width="0.8"/></svg>
<div class="a" style="left:11.7px;top:709.5px;width:18px;height:15.3px;background:#cfe4f6;"></div>
<div class="a" style="left:32.8px;top:709.5px;width:18px;height:15.3px;background:#cfe4f6;"></div>
<div class="a" style="left:59.6px;top:709.5px;width:18px;height:15.3px;background:#cfe4f6;"></div>
<div class="a" style="left:81px;top:709.5px;width:18px;height:15.3px;background:#cfe4f6;"></div>
<div class="a" style="left:157.8px;top:709.5px;width:18px;height:15.3px;background:#cfe4f6;"></div>
<svg style="left:11.7px;top:709.5px" width="18" height="16" viewBox="0 0 18 16"><polygon points="4.5,1 5.5,3.5 8,2.5 6.5,4.8 8.5,6.5 6,6.5 5.5,9 4.2,6.8 1.5,7.5 3,5.3 1,3.2 3.6,3.6" fill="#f6e21a" stroke="#e0c000" stroke-width="0.3"/><rect x="6.5" y="6.5" width="9" height="7.5" fill="#f4f4f4" stroke="#6a6a6a" stroke-width="1"/><rect x="7" y="7" width="8" height="2" fill="#2d4aa8"/></svg>
<svg style="left:32.8px;top:709.5px" width="18" height="16" viewBox="0 0 18 16"><rect x="2.5" y="2.5" width="9" height="7.5" fill="#f4f4f4" stroke="#6a6a6a" stroke-width="1"/><rect x="3" y="3" width="8" height="2" fill="#2d4aa8"/><rect x="6.5" y="6.5" width="9" height="7.5" fill="#f4f4f4" stroke="#6a6a6a" stroke-width="1"/><rect x="7" y="7" width="8" height="2" fill="#2d4aa8"/></svg>
<svg style="left:59.6px;top:709.5px" width="18" height="16" viewBox="0 0 18 16"><path d="M2.5 4 L4 5.5 L6.5 2" fill="none" stroke="#222" stroke-width="1.1"/><path d="M2.5 10 L4 11.5 L6.5 8" fill="none" stroke="#222" stroke-width="1.1"/><path d="M8 8.5 L10.5 11.5 L15.5 4.5" fill="none" stroke="#1aa040" stroke-width="1.8"/></svg>
<svg style="left:81px;top:709.5px" width="18" height="16" viewBox="0 0 18 16"><path d="M2.5 4 L4 5.5 L6.5 2" fill="none" stroke="#222" stroke-width="1.1"/><rect x="2.5" y="8" width="4" height="4" fill="none" stroke="#999" stroke-width="0.7"/><path d="M9 6 Q12 3 15 5.5" fill="none" stroke="#1aa040" stroke-width="1.5"/><path d="M15 9 Q12 12 9 9.5" fill="none" stroke="#1aa040" stroke-width="1.5"/></svg>
<svg style="left:157.8px;top:709.5px" width="18" height="16" viewBox="0 0 18 16"><path d="M5 3.5 L13 11.5 M13 3.5 L5 11.5" stroke="#e81010" stroke-width="2.2"/></svg>
<div class="a" style="left:199px;top:311.2px;width:18.3px;height:15.6px;background:#cfe4f6;"></div>
<div class="a" style="left:220.2px;top:311.2px;width:18.3px;height:15.6px;background:#cfe4f6;"></div>
<div class="a" style="left:383px;top:311.2px;width:18.3px;height:15.6px;background:#cfe4f6;"></div>
<div class="a" style="left:404.2px;top:311.2px;width:18.3px;height:15.6px;background:#cfe4f6;"></div>
<div class="a" style="left:566.4px;top:311.2px;width:18.3px;height:15.6px;background:#cfe4f6;"></div>
<svg style="left:199px;top:311.2px" width="19" height="16" viewBox="0 0 19 16"><rect x="3" y="7.5" width="5.5" height="2.5" fill="#fff" stroke="#8a8a8a" stroke-width="0.6"/><rect x="3" y="10.7" width="5.5" height="2.5" fill="#fff" stroke="#8a8a8a" stroke-width="0.6"/><polygon points="3,4.5 6,2 6,3.5 9,3.5 9,5.5 6,5.5 6,7" fill="#0a8a30"/><path d="M9 3 L14 3 M9 6 L14 6" stroke="#6cc890" stroke-width="0.9"/></svg>
<svg style="left:220.2px;top:311.2px" width="19" height="16" viewBox="0 0 19 16"><rect x="3" y="2" width="5.5" height="2.5" fill="#fff" stroke="#8a8a8a" stroke-width="0.6"/><rect x="3" y="5.2" width="5.5" height="2.5" fill="#fff" stroke="#8a8a8a" stroke-width="0.6"/><polygon points="3,10.5 6,8 6,9.5 9,9.5 9,11.5 6,11.5 6,13" fill="#0a8a30"/><path d="M9 9 L14 9 M9 12 L14 12" stroke="#6cc890" stroke-width="0.9"/></svg>
<svg style="left:383px;top:311.2px" width="19" height="16" viewBox="0 0 19 16"><polygon points="4,8 7,5 11,5 11,11 8,13 4,12" fill="#1a8a3a"/><polygon points="7,5 10,3.5 13,4.5 11,5" fill="#2eb050"/><circle cx="6" cy="10.5" r="0.8" fill="#9ef0a0"/><circle cx="8.5" cy="8" r="0.8" fill="#9ef0a0"/><polygon points="13,6.5 15,8.2 13,10" fill="#555"/></svg>
<svg style="left:404.2px;top:311.2px" width="19" height="16" viewBox="0 0 19 16"><path d="M3.5 5 L12 5 L13 6 L13 13 L3.5 13 Z" fill="#555"/><rect x="5.5" y="6" width="5" height="3" fill="#bbb"/><rect x="6" y="10.5" width="4" height="2.5" fill="#ddd"/><polygon points="10,4 13,2 16,3 16,7 13,9 10,8" fill="#1a9a3a"/></svg>
<svg style="left:566.4px;top:311.2px" width="19" height="16" viewBox="0 0 19 16"><path d="M5 3.8 L13.5 12 M13.5 3.8 L5 12" stroke="#e81010" stroke-width="2.2"/></svg>
<div class="a" style="left:7.8px;top:742.3px;width:18.2px;height:14.7px;background:#cfe4f6;"></div>
<div class="a" style="left:34.6px;top:742.3px;width:18.1px;height:14.7px;background:#cfe4f6;"></div>
<div class="a" style="left:79.7px;top:742.3px;width:18px;height:14.7px;background:#cfe4f6;"></div>
<div class="a" style="left:106px;top:742.3px;width:18.6px;height:14.7px;background:#cfe4f6;"></div>
<div class="a" style="left:133.2px;top:742.3px;width:18.6px;height:14.7px;background:#e6e6e6;"></div>
<svg style="left:7.8px;top:742.3px" width="19" height="15" viewBox="0 0 19 15"><circle cx="10" cy="6.5" r="4.6" fill="#4d4d4d"/><path d="M6.5 9 L3.5 12.5 L8 10.5 Z" fill="#4d4d4d"/><text x="8.2" y="9.2" font-family="Liberation Sans" font-weight="bold" font-size="7" fill="#fff">?</text></svg>
<svg style="left:34.6px;top:742.3px" width="19" height="15" viewBox="0 0 19 15"><rect x="3" y="1.5" width="12" height="2.6" fill="#7ed07e"/><text x="2.5" y="12" font-family="Liberation Sans" font-weight="bold" font-size="7.5" fill="#222">0.</text><text x="8.5" y="12" font-family="Liberation Sans" font-size="7.5" fill="#2f6fd6">00</text><path d="M8.5 13 L15 13" stroke="#2f6fd6" stroke-width="0.6"/></svg>
<div class="a" style="left:61px;top:742.3px;width:15.8px;height:15px;background:#79b800;border:1.2px solid #222;border-radius:1.5px"></div>
<svg style="left:79.7px;top:742.3px" width="18" height="15" viewBox="0 0 18 15"><rect x="2.5" y="1.5" width="2.5" height="2.5" fill="#e02020"/><rect x="5" y="1.5" width="2.5" height="2.5" fill="#f0d000"/><rect x="2.5" y="4" width="2.5" height="2.5" fill="#20b020"/><rect x="5" y="4" width="2.5" height="2.5" fill="#2040e0"/><path d="M3 13.5 L5 7.5 L7 13.5 M3.8 11.5 L6.2 11.5" fill="none" stroke="#222" stroke-width="0.9"/><rect x="8.5" y="6.5" width="7.5" height="5" fill="#f4f4f4" stroke="#6a6a6a" stroke-width="0.8"/><rect x="9" y="7" width="6.5" height="1.5" fill="#2d4aa8"/></svg>
<svg style="left:106px;top:742.3px" width="19" height="15" viewBox="0 0 19 15"><rect x="3.5" y="2.5" width="12" height="8" fill="#e8eef4" stroke="#9aa4ae" stroke-width="0.9"/><path d="M5 7.5 Q9 2.5 14 4.5 L13 8 Q9 5.5 6 9 Z" fill="#3a72b8"/><path d="M9.5 10.5 L9.5 12.5 M6.5 13 L12.5 13" stroke="#9aa4ae" stroke-width="0.9"/></svg>
<svg style="left:133.2px;top:742.3px" width="19" height="15" viewBox="0 0 19 15"><text x="4" y="12" font-family="Liberation Serif" font-style="italic" font-size="10" fill="#777">f</text><text x="8.5" y="12.5" font-family="Liberation Serif" font-style="italic" font-size="8" fill="#777">x</text><circle cx="12.5" cy="4" r="1.8" fill="none" stroke="#777" stroke-width="0.7"/></svg>
<div class="a" style="left:601.3px;top:703.2px;width:19px;height:15.5px;background:#d8ecfb;border:1.3px solid #5b96d4;border-radius:1.5px"></div>
<svg style="left:601.3px;top:703.2px" width="19" height="16" viewBox="0 0 19 16"><rect x="3" y="2.5" width="6.5" height="5.5" fill="#5a7ee6"/><path d="M4.5 7 Q5 4 8 4" fill="none" stroke="#d8e4ff" stroke-width="0.8"/><path d="M12 3 Q15 4.5 13.5 7" fill="none" stroke="#555" stroke-width="1.1"/><path d="M5 9.5 Q4.5 12 7.5 13" fill="none" stroke="#555" stroke-width="1.1"/><rect x="10" y="9" width="5" height="2.2" fill="#3a58a8"/><rect x="11" y="11.8" width="5" height="2.2" fill="#3a58a8"/></svg>
<div class="a" style="left:722.9px;top:702.9px;width:27.1px;height:14.9px;background:#cfe4f6;"></div>
<div class="a" style="left:753px;top:702.9px;width:17.9px;height:14.9px;background:#cfe4f6;"></div>
<div class="a" style="left:780px;top:702.9px;width:17.8px;height:14.9px;background:#cfe4f6;"></div>
<div class="a" style="left:801px;top:702.9px;width:17.9px;height:14.9px;background:#cfe4f6;"></div>
<div class="a" style="left:822px;top:702.9px;width:18px;height:14.9px;background:#cfe4f6;"></div>
<div class="a" style="left:843.2px;top:702.9px;width:17.8px;height:14.9px;background:#cfe4f6;"></div>
<div class="a" style="left:864.3px;top:702.9px;width:26.7px;height:14.9px;background:#cfe4f6;"></div>
<div class="a" style="left:894px;top:702.9px;width:26.9px;height:14.9px;background:#cfe4f6;"></div>
<div class="a" style="left:923.8px;top:702.9px;width:27.8px;height:14.9px;background:#cfe4f6;"></div>
<div class="a" style="left:960.6px;top:702.9px;width:17.4px;height:14.9px;background:#cfe4f6;"></div>
<div class="a" style="left:987px;top:702.9px;width:18.2px;height:14.9px;background:#cfe4f6;"></div>
<svg style="left:722.9px;top:702.9px" width="28" height="15" viewBox="0 0 28 15"><path d="M6.5 9.5 L6.5 2.5" stroke="#1a50d0" stroke-width="1.1"/><polygon points="5,3.5 6.5,1 8,3.5" fill="#1a50d0"/><path d="M6.5 9.5 L10 11" stroke="#e04020" stroke-width="1.1"/><path d="M6.5 9.5 L2.5 12" stroke="#20a040" stroke-width="1.1"/><circle cx="6.5" cy="9.5" r="1.2" fill="#f0d020"/><polygon points="19,6 24,6 21.5,9" fill="#111"/></svg>
<svg style="left:753px;top:702.9px" width="18" height="15" viewBox="0 0 18 15"><polygon points="3,3 3,12.5 12,12.5" fill="#9ed87a" stroke="#60a040" stroke-width="0.6"/><rect x="2" y="12.5" width="13" height="1.8" fill="#d8d8d8"/><ellipse cx="13" cy="4" rx="3" ry="2" fill="#5050a0"/><circle cx="13" cy="4" r="0.9" fill="#fff"/></svg>
<svg style="left:780px;top:702.9px" width="18" height="15" viewBox="0 0 18 15"><path d="M4.5 3 L4.5 12" stroke="#1a50d0" stroke-width="1.1"/><polygon points="3,10.5 4.5,13.5 6,10.5" fill="#1a50d0"/><path d="M4.5 3 L10.5 3" stroke="#20a040" stroke-width="1.1"/><polygon points="9.5,1.5 12.5,3 9.5,4.5" fill="#20a040"/><circle cx="4.5" cy="3" r="1.5" fill="#f0c020"/><text x="9" y="12.8" font-family="Liberation Sans" font-weight="bold" font-size="7" fill="#111">X</text></svg>
<svg style="left:801px;top:702.9px" width="18" height="15" viewBox="0 0 18 15"><path d="M4.5 3 L4.5 12" stroke="#1a50d0" stroke-width="1.1"/><polygon points="3,10.5 4.5,13.5 6,10.5" fill="#1a50d0"/><path d="M4.5 3 L10.5 3" stroke="#e04020" stroke-width="1.1"/><polygon points="9.5,1.5 12.5,3 9.5,4.5" fill="#e04020"/><circle cx="4.5" cy="3" r="1.5" fill="#20a040"/><text x="9" y="12.8" font-family="Liberation Sans" font-weight="bold" font-size="7" fill="#111">-Y</text></svg>
<svg style="left:822px;top:702.9px" width="18" height="15" viewBox="0 0 18 15"><path d="M4.5 3 L4.5 12" stroke="#20a040" stroke-width="1.1"/><polygon points="3,10.5 4.5,13.5 6,10.5" fill="#20a040"/><path d="M4.5 3 L10.5 3" stroke="#e04020" stroke-width="1.1"/><polygon points="9.5,1.5 12.5,3 9.5,4.5" fill="#e04020"/><circle cx="4.5" cy="3" r="1.5" fill="#f0c020"/><text x="9" y="12.8" font-family="Liberation Sans" font-weight="bold" font-size="7" fill="#111">Z</text></svg>
<svg style="left:843.2px;top:702.9px" width="18" height="15" viewBox="0 0 18 15"><path d="M4.5 12 L4.5 3" stroke="#20a040" stroke-width="1.1"/><polygon points="3,4.5 4.5,1.5 6,4.5" fill="#20a040"/><path d="M4.5 12 L10.5 12" stroke="#e04020" stroke-width="1.1"/><polygon points="9.5,10.5 12.5,12 9.5,13.5" fill="#e04020"/><circle cx="4.5" cy="12" r="1.5" fill="#1a40c0"/><text x="9" y="7.5" font-family="Liberation Sans" font-weight="bold" font-size="7" fill="#111">-Z</text></svg>
<svg style="left:864.3px;top:702.9px" width="27" height="15" viewBox="0 0 27 15"><polygon points="3,5 8,3 13,4 13,8 9,9 9,13 3,12" fill="#6f94c6"/><polygon points="3,5 8,3 13,4 8,6" fill="#a8c4e8"/><polygon points="9,9 13,8 13,12 9,13" fill="#5a7cb0"/><polygon points="19,6 24,6 21.5,9" fill="#111"/></svg>
<svg style="left:894px;top:702.9px" width="27" height="15" viewBox="0 0 27 15"><polygon points="3,5 6,3 14,3 14,10 11,12.5 3,12.5" fill="#c8d0dc" stroke="#8a94a4" stroke-width="0.7"/><path d="M3 5 L11 5 L14 3 M11 5 L11 12.5" fill="none" stroke="#8a94a4" stroke-width="0.7"/><polygon points="19,6 24,6 21.5,9" fill="#111"/></svg>
<svg style="left:923.8px;top:702.9px" width="28" height="15" viewBox="0 0 28 15"><rect x="5.5" y="2" width="8" height="3" fill="#fff" stroke="#555" stroke-width="0.7"/><rect x="3" y="5" width="13" height="6" rx="1" fill="#5a5a5a"/><rect x="5.5" y="9" width="8" height="4" fill="#fff" stroke="#555" stroke-width="0.7"/><polygon points="20,6 25,6 22.5,9" fill="#111"/></svg>
<svg style="left:960.6px;top:702.9px" width="18" height="15" viewBox="0 0 18 15"><circle cx="7" cy="7" r="3.5" fill="none" stroke="#444" stroke-width="1.3"/><path d="M9.5 9.5 L13 13" stroke="#444" stroke-width="1.6"/><path d="M9 2 L14 7 M14 2 L9 7" stroke="#e01010" stroke-width="1.6"/></svg>
<svg style="left:987px;top:702.9px" width="18" height="15" viewBox="0 0 18 15"><rect x="3.5" y="2" width="9" height="11" fill="#f0f0f0" stroke="#666" stroke-width="0.8"/><rect x="4" y="2.5" width="8" height="1.6" fill="#2d4aa8"/><polygon points="13.5,5.5 16,7.5 13.5,9.5" fill="#444"/></svg><!--/ICONS-->
<!-- BOTTOM BUTTONS -->
<div class="a" style="left:806px;top:742.5px;width:65px;height:17px;background:#e0edf9;border:1px solid #3d8fe0;border-radius:3px"></div>
<div class="a" style="left:879px;top:742.5px;width:64px;height:17px;background:#fdfdfd;border:1px solid #d3d3d3;border-radius:3px"></div>
<div class="a" style="left:951px;top:742.5px;width:65px;height:17px;background:#fdfdfd;border:1px solid #d3d3d3;border-radius:3px"></div>
<div class="t" style="left:832px;top:745.8px">OK</div>
<div class="t" style="left:898.5px;top:745.8px">Cancel</div>
<div class="t" style="left:972.5px;top:745.8px">Apply</div>
</body></html>
